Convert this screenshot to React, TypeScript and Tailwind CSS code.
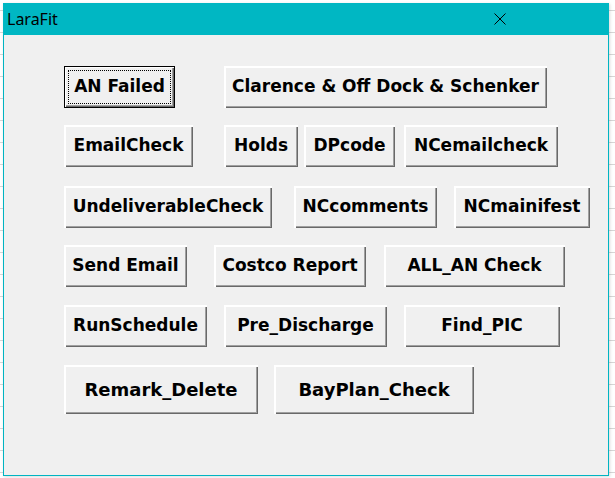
type Btn = { label: string; cls: string; focused?: boolean };

// each row: top margin + buttons with their left offset and width
const rows: { mt: string; h: string; text: string; items: Btn[] }[] = [
  {
    mt: 'mt-[31px]',
    h: 'h-[42px]',
    text: 'text-[17px]',
    items: [
      { label: 'AN Failed', cls: 'ml-[60px] w-[111px]', focused: true },
      { label: 'Clarence & Off Dock & Schenker', cls: 'ml-[49px] w-[323px]' },
    ],
  },
  {
    mt: 'mt-[17px]',
    h: 'h-[42px]',
    text: 'text-[17px]',
    items: [
      { label: 'EmailCheck', cls: 'ml-[60px] w-[129px]' },
      { label: 'Holds', cls: 'ml-[31px] w-[74px]' },
      { label: 'DPcode', cls: 'ml-[6px] w-[91px]' },
      { label: 'NCemailcheck', cls: 'ml-[9px] w-[154px]' },
    ],
  },
  {
    mt: 'mt-[19px]',
    h: 'h-[42px]',
    text: 'text-[17px]',
    items: [
      { label: 'UndeliverableCheck', cls: 'ml-[60px] w-[208px]' },
      { label: 'NCcomments', cls: 'ml-[22px] w-[143px]' },
      { label: 'NCmainifest', cls: 'ml-[17px] w-[136px]' },
    ],
  },
  {
    mt: 'mt-[17px]',
    h: 'h-[42px]',
    text: 'text-[17px]',
    items: [
      { label: 'Send Email', cls: 'ml-[60px] w-[123px]' },
      { label: 'Costco Report', cls: 'ml-[27px] w-[152px]' },
      { label: 'ALL_AN Check', cls: 'ml-[18px] w-[181px]' },
    ],
  },
  {
    mt: 'mt-[18px]',
    h: 'h-[42px]',
    text: 'text-[17px]',
    items: [
      { label: 'RunSchedule', cls: 'ml-[60px] w-[143px]' },
      { label: 'Pre_Discharge', cls: 'ml-[17px] w-[163px]' },
      { label: 'Find_PIC', cls: 'ml-[17px] w-[156px]' },
    ],
  },
  {
    mt: 'mt-[18px]',
    h: 'h-[49px]',
    text: 'text-[18px]',
    items: [
      { label: 'Remark_Delete', cls: 'ml-[60px] w-[194px]' },
      { label: 'BayPlan_Check', cls: 'ml-[16px] w-[200px]' },
    ],
  },
];

function ClassicButton({ b, h, text }: { b: Btn; h: string; text: string }) {
  if (b.focused) {
    return (
      <button
        className={`relative shrink-0 ${b.cls} ${h} ${text} font-bold text-black bg-[#f0f0f0] border border-black shadow-[inset_1px_1px_0_#ffffff,inset_-1px_-1px_0_#696969,inset_-2px_-2px_0_#a0a0a0] flex items-center justify-center`}
      >
        <span className="absolute inset-[3px] border border-dotted border-black" />
        {b.label}
      </button>
    );
  }
  return (
    <button
      className={`shrink-0 ${b.cls} ${h} ${text} font-bold text-black bg-[#f0f0f0] shadow-[inset_2px_2px_0_#ffffff,inset_-1px_-1px_0_#696969,inset_-2px_-2px_0_#a0a0a0] flex items-center justify-center whitespace-nowrap`}
    >
      {b.label}
    </button>
  );
}

export default function App() {
  return (
    <div className="w-[615px] h-[478px] overflow-hidden bg-white bg-[repeating-linear-gradient(to_bottom,transparent_0,transparent_10px,#d6d6d6_10px,#d6d6d6_11px,transparent_11px,transparent_22px)] pl-[3px] pt-[3px]">
      {/* UserForm window: teal frame around a grey client area */}
      <div className="w-[606px] h-[473px] bg-[#00b4c2] px-px pb-px shadow-[1px_1px_3px_rgba(0,0,0,0.15)]">
        <div className="h-full flex flex-col bg-[#f0f0f0] font-['DejaVu_Sans',sans-serif]">
          <div className="h-[32px] -mx-px bg-[#00b7c3] flex items-center justify-between pl-[4px] pr-[103px] shrink-0">
            <span className="font-['Noto_Sans',sans-serif] text-[16px] text-black">LaraFit</span>
            <svg width="12" height="12" viewBox="0 0 12 12" className="text-black">
              <path d="M0.5 0.5 L11.5 11.5 M11.5 0.5 L0.5 11.5" stroke="currentColor" strokeWidth="1" fill="none" />
            </svg>
          </div>
          {rows.map((r, i) => (
            <div key={i} className={`flex ${r.mt}`}>
              {r.items.map((b) => (
                <ClassicButton key={b.label} b={b} h={r.h} text={r.text} />
              ))}
            </div>
          ))}
        </div>
      </div>
    </div>
  );
}
